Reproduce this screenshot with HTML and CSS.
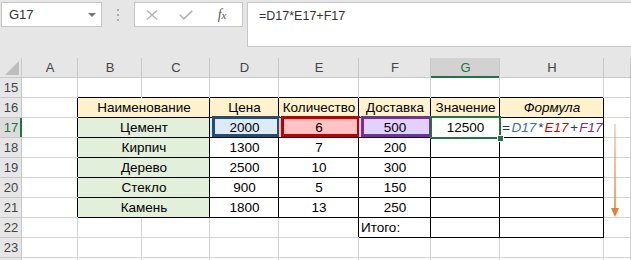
FILE: index.html
```html
<!DOCTYPE html>
<html lang="ru">
<head>
    <meta charset="UTF-8">
    <title>Формула</title>
    <link rel="stylesheet" href="styles.css">
</head>
<body>

    <div class="toolbar">
        <div class="namebox">G17<span class="caret"></span></div>
        <div class="grip"><i></i><i></i><i></i></div>
        <div class="btns">
            <span class="b-x">
                <svg width="12" height="10" viewBox="0 0 12 10"><path d="M1 0.5 L11 9.5 M11 0.5 L1 9.5" stroke="#b4b4b4" stroke-width="1.4" fill="none"/></svg>
            </span>
            <span class="b-ok">
                <svg width="14" height="10" viewBox="0 0 14 10"><path d="M0.8 4.8 L4.8 8.8 L13.2 0.8" stroke="#b4b4b4" stroke-width="1.6" fill="none"/></svg>
            </span>
            <span class="b-fx">f<sub>x</sub></span>
        </div>
        <div class="fbar">=D17*E17+F17</div>
    </div>

    <div class="sheet">
        <!-- заголовки столбцов -->
        <div class="corner"><svg width="14" height="14" viewBox="0 0 14 14"><path d="M14 0 L14 14 L0 14 Z" fill="#bdbdbd"/></svg></div>
        <div class="ch">A</div>
        <div class="ch">B</div>
        <div class="ch">C</div>
        <div class="ch">D</div>
        <div class="ch">E</div>
        <div class="ch">F</div>
        <div class="ch active">G</div>
        <div class="ch">H</div>
        <div class="ch"></div>

        <!-- 15 -->
        <div class="rh">15</div>
        <div class="c"></div>
        <div class="bb"></div>
        <div class="bb"></div>
        <div class="bb"></div>
        <div class="bb"></div>
        <div class="bb"></div>
        <div class="bb"></div>
        <div class="bb"></div>
        <div class="c"></div>

        <!-- 16 -->
        <div class="rh">16</div>
        <div class="rb"></div>
        <div class="t hd wide">Наименование</div>
        <div class="t hd">Цена</div>
        <div class="t hd">Количество</div>
        <div class="t hd">Доставка</div>
        <div class="t hd">Значение</div>
        <div class="t hd it">Формула</div>
        <div class="c"></div>

        <!-- 17 -->
        <div class="rh active">17</div>
        <div class="rb"></div>
        <div class="t nm wide">Цемент</div>
        <div class="t mark m-blue">2000</div>
        <div class="t mark m-red">6</div>
        <div class="t mark m-violet">500</div>
        <div class="t selected">12500</div>
        <div class="t formula">=<span class="f-d">D17</span>*<span class="f-e">E17</span>+<span class="f-f">F17</span></div>
        <div class="c"></div>

        <!-- 18 -->
        <div class="rh">18</div>
        <div class="rb"></div>
        <div class="t nm wide">Кирпич</div>
        <div class="t">1300</div>
        <div class="t">7</div>
        <div class="t">200</div>
        <div class="t"></div>
        <div class="t"></div>
        <div class="c"></div>

        <!-- 19 -->
        <div class="rh">19</div>
        <div class="rb"></div>
        <div class="t nm wide">Дерево</div>
        <div class="t">2500</div>
        <div class="t">10</div>
        <div class="t">300</div>
        <div class="t"></div>
        <div class="t"></div>
        <div class="c"></div>

        <!-- 20 -->
        <div class="rh">20</div>
        <div class="rb"></div>
        <div class="t nm wide">Стекло</div>
        <div class="t">900</div>
        <div class="t">5</div>
        <div class="t">150</div>
        <div class="t"></div>
        <div class="t"></div>
        <div class="c"></div>

        <!-- 21 -->
        <div class="rh">21</div>
        <div class="rb"></div>
        <div class="t nm wide">Камень</div>
        <div class="t">1800</div>
        <div class="t">13</div>
        <div class="t">250</div>
        <div class="t"></div>
        <div class="t"></div>
        <div class="c"></div>

        <!-- 22 -->
        <div class="rh">22</div>
        <div class="c"></div>
        <div class="c"></div>
        <div class="c"></div>
        <div class="c"></div>
        <div class="rb"></div>
        <div class="t left">Итого:</div>
        <div class="t"></div>
        <div class="t"></div>
        <div class="c"></div>

        <!-- 23 -->
        <div class="rh">23</div>
        <div class="c"></div>
        <div class="c"></div>
        <div class="c"></div>
        <div class="c"></div>
        <div class="c"></div>
        <div class="c"></div>
        <div class="c"></div>
        <div class="c"></div>
        <div class="c"></div>

        <!-- 24: видна только верхняя кромка -->
        <div class="rh"></div>
        <div class="c"></div>
        <div class="c"></div>
        <div class="c"></div>
        <div class="c"></div>
        <div class="c"></div>
        <div class="c"></div>
        <div class="c"></div>
        <div class="c"></div>
        <div class="c"></div>
    </div>

    <!-- стрелка "протянуть вниз" -->
    <svg class="arrow" width="12" height="96" viewBox="0 0 12 96">
        <defs>
            <linearGradient id="fade" x1="0" y1="0" x2="0" y2="1">
                <stop offset="0" stop-color="#ed7d31" stop-opacity="0.4"/>
                <stop offset="1" stop-color="#ed7d31" stop-opacity="1"/>
            </linearGradient>
        </defs>
        <rect x="5.25" y="0" width="1.5" height="86" fill="url(#fade)"/>
        <path d="M2 84 L10 84 L6 93 Z" fill="#ed7d31"/>
    </svg>

</body>
</html>
```

FILE: styles.css
```css
body {
    margin: 0;
    padding: 0;
    font-family: "Liberation Sans", Arial, sans-serif;
    background-color: #e6e6e6;
    width: 631px;
    height: 260px;
    overflow: hidden;
    position: relative;
}

/* строка формул */
.toolbar {
    height: 58px;
    box-sizing: border-box;
    padding-top: 2px;
    display: flex;
    align-items: flex-start;
}
.namebox {
    margin-left: 1px;
    width: 101px;
    height: 25px;
    box-sizing: border-box;
    background-color: #fff;
    border: 1px solid #c6c6c6;
    display: flex;
    align-items: center;
    padding-left: 7px;
    font-size: 13px;
    color: #333;
}
.caret {
    margin-left: auto;
    margin-right: 5px;
    border-left: 4px solid transparent;
    border-right: 4px solid transparent;
    border-top: 4px solid #777;
}
.grip {
    width: 32px;
    height: 25px;
    display: flex;
    flex-direction: column;
    align-items: center;
    justify-content: center;
    gap: 3px;
}
.grip i {
    display: block;
    width: 2px;
    height: 2px;
    background-color: #a8a8a8;
}
.btns {
    width: 109px;
    height: 25px;
    box-sizing: border-box;
    background-color: #fff;
    border: 1px solid #c6c6c6;
    display: flex;
    align-items: center;
}
.btns span {
    display: flex;
    justify-content: center;
    align-items: center;
}
.b-x {
    width: 36px;
}
.b-ok {
    width: 35px;
}
.b-fx {
    width: 42px;
    font-family: "Liberation Serif", serif;
    font-style: italic;
    font-size: 14px;
    color: #5a5a5a;
}
.b-fx sub {
    font-size: 11px;
    vertical-align: -1px;
}
.fbar {
    flex: 1;
    margin-left: 4px;
    height: 45px;
    box-sizing: border-box;
    background-color: #fff;
    border: 1px solid #c6c6c6;
    border-right: none;
    padding: 5px 0 0 11px;
    font-size: 12.5px;
    line-height: 16px;
    color: #333;
}

/* лист */
.sheet {
    display: grid;
    grid-template-columns: 22px 56px 64px 68px 69px 80px 72px 69px 104px 27px;
    grid-auto-rows: 20px;
    height: 202px;
    overflow: hidden;
    background-color: #fff;
    font-size: 13.5px;
    line-height: 19px;
    color: #000;
}
.sheet > div {
    text-align: center;
    white-space: nowrap;
}
.corner {
    background-color: #e6e6e6;
    box-shadow: inset -1px -1px 0 #c8c8c8;
    display: flex;
    align-items: flex-end;
    justify-content: flex-end;
    padding: 0 3px 3px 0;
    box-sizing: border-box;
}
.ch {
    background-color: #e6e6e6;
    box-shadow: inset -1px -1px 0 #c8c8c8;
    font-size: 13px;
    color: #444;
}
.ch.active {
    background-color: #d2d2d2;
    color: #217346;
    box-shadow: inset -1px 0 0 #c8c8c8, inset 0 -2px 0 #217346;
}
.rh {
    background-color: #e6e6e6;
    box-shadow: inset -1px -1px 0 #c8c8c8;
    font-size: 13px;
    color: #444;
}
.rh.active {
    background-color: #dcdcdc;
    color: #217346;
    box-shadow: inset 0 -1px 0 #c8c8c8, inset -2px 0 0 #217346;
}

.c {
    box-shadow: inset -1px -1px 0 #d4d4d4;
}
.bb {
    box-shadow: inset -1px 0 0 #d4d4d4, inset 0 -1px 0 #000;
}
.rb {
    box-shadow: inset 0 -1px 0 #d4d4d4, inset -1px 0 0 #000;
}
.t {
    box-shadow: inset -1px -1px 0 #000;
}
.wide {
    grid-column: span 2;
}
.hd {
    background-color: #fff2cc;
}
.it {
    font-style: italic;
}
.nm {
    background-color: #e2efda;
}
.left {
    text-align: left !important;
    padding-left: 2px;
}

/* выделенные ячейки-аргументы */
.mark {
    position: relative;
}
.mark::after {
    content: "";
    position: absolute;
    top: -2px;
    left: 2px;
    right: -1px;
    bottom: 1px;
    border: 3px solid;
}
.m-blue {
    background-color: #ddebf7;
}
.m-blue::after {
    border-color: #1f4e79;
}
.m-red {
    background-color: #ffc3c3;
}
.m-red::after {
    border-color: #c00000;
}
.m-violet {
    background-color: #e2d1fa;
}
.m-violet::after {
    border-color: #7030a0;
}

.selected {
    position: relative;
}
.selected::after {
    content: "";
    position: absolute;
    top: -2px;
    left: -1px;
    right: -1px;
    bottom: -1px;
    border: 2px solid #217346;
}
.selected::before {
    content: "";
    position: absolute;
    right: -4px;
    bottom: -4px;
    width: 5px;
    height: 5px;
    background-color: #217346;
    border: 1px solid #fff;
    z-index: 2;
}

.formula {
    text-align: left !important;
    padding-left: 2px;
    font-style: italic;
    color: #1f3864;
}
.formula span {
    margin: 0 1.5px;
}
.f-d {
    color: #2e75b6;
}
.f-e {
    color: #e00000;
}
.f-f {
    color: #7030a0;
}

.arrow {
    position: absolute;
    left: 609px;
    top: 124px;
}
```
